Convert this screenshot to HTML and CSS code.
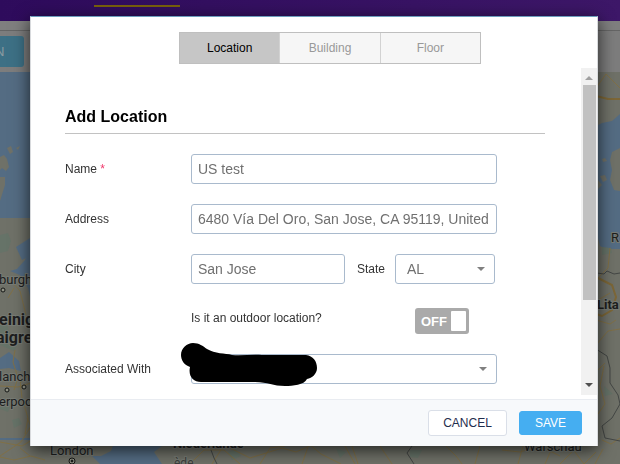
FILE: index.html
```
<!DOCTYPE html>
<html lang="en">
<head>
<meta charset="UTF-8" />
<meta name="viewport" content="width=device-width, initial-scale=1" />
<title>Add Location</title>
<link rel="stylesheet" href="styles.css">
</head>
<body>
<div class="page">
  <header class="topbar"><span class="topbar-active"></span></header>
  <div class="toolbar"><button type="button" class="map-btn">N</button></div>
  <svg class="map" viewBox="0 72 620 392" preserveAspectRatio="xMinYMin slice" aria-hidden="true">
    <rect y="72" width="620" height="392" fill="#546c83" />
    <!-- land -->
    <g fill="#6f7168">
      <path d="M0 157l4-2 3 4 2 8-3 4-4-3-2 2zM7 148l4-2 2 6-3 2zM16 148l4-2-2 4zM0 177l5 0 0 8-5 16z" />
      <path d="M0 218h31v28l-6 14-8 9-7 2 10 4 8 13 3 12v156h70l10-5 5-13H0z" />
      <path d="M100 464l-8-8 0-16h-92v24z" />
      <path d="M170 440h450v24H162l-8-12z" />
      <path d="M596 72h24v42l-8 7-10 2-6 3zM620 148l-8 4-2 8 2 10-2 10 4 10 6 1zM602 159l3-1 2 3-4 1zM600 176l5-1 2 5-4 2zM598 180l4 5-4 4z" />
      <path d="M596 230l4 16 6 3h14v215h-24z" />
    </g>
    <path d="M16 247l14-9v18l-8 4zM0 358l9-6 10 9 2 10-12-3-9 1z" fill="#546c83" />
    <g fill="#667368">
      <path d="M0 235l8-2 3 8-3 10-8 2zM0 318l6 3 5 17 7 6-4 7-14-6zM3 398l9 5-4 9-8-3zM12 420l7-2 3 6-8 4zM604 386l9 8-8 2zM602 247l9 1 1 5-10 2zM336 448l10 4-6 6zM410 450h12l-4 8-8-1zM228 452l8-3 5 7-9 4z" />
    </g>
    <!-- roads -->
    <g fill="none" stroke="#807047" stroke-width="1">
      <path d="M0 275l10 5 10 11 6 24M14 288l-6 10M15 350l-2 12 5 16-4 12M0 386l18 1 13-4M20 380l2 18 6 20-3 16M0 457l14 3 17-4 14 4M27 418l4 8-10 16-21 14M0 442l22 4 10-6M30 456l-10-8" />
      <path d="M596 88l10-14 14 14M610 248l-2 20-12 12M596 320l14 4 6-4M598 300l12-7M596 345l12-14 12-2M604 366l-4 20 5 18-7 10M596 372l9-9M602 440l9 4 9-6M603 449l-8 15" />
      <path d="M190 464l14-14 20 0 16 14M212 464l12-19 26 13 32-10 14 4 18-8M260 464l10-16 15-2M302 464l7-20 12 10 20 10M345 446l10 18M358 464l-6-18M380 446l12 18M446 446l10 10 6 8M480 446l-5 18M502 450l18 2 20-6 20 10M518 464l5-18M545 464l7-16M572 448l12 16 12-12M560 464l14-14" />
    </g>
    <path d="M596 96l12 3 12 0M596 314l6 2 10-6 4-13-4-12-14-7M20 382l8-7 3 4" fill="none" stroke="#7d6737" stroke-width="2" />
    <!-- borders -->
    <path d="M597 273l7 1 3-3 7 3 6-1M596 349l11 7 3 12 0 15 8 12 2 9-8 14-10 8 3 12 15 3M412 446l-5 7 7 11M211 450l3 8 3 6" fill="none" stroke="#444745" stroke-width="1" />
    <g fill="#929487" stroke="#151716" stroke-width="1">
      <circle cx="3" cy="290" r="2" /><circle cx="7" cy="390" r="2" /><circle cx="24" cy="387" r="2" />
      <circle cx="72" cy="461" r="3" /><circle cx="72" cy="461" r="1" fill="#151716" />
    </g>
    <g class="map-labels">
      <text x="-1" y="284">burgh</text>
      <text x="-1" y="381">lanch</text>
      <text x="-1" y="406">erpoo</text>
      <text x="50" y="455">London</text>
      <text x="611" y="242">R</text>
      <text x="524" y="451">Warschau</text>
    </g>
    <g class="map-labels map-minor">
      <text x="174" y="467">ède</text>
    </g>
    <g class="map-labels map-countries">
      <text x="-1" y="325">einig</text>
      <text x="-4" y="343">aigre</text>
    </g>
    <g class="map-labels map-regions">
      <text x="597" y="309">Lita</text>
      <text x="173" y="448">Niederlande</text>
    </g>
  </svg>
</div>

<div class="overlay">
  <form class="modal" aria-labelledby="modal-title">
    <nav class="steps" aria-label="Steps">
      <button type="button" class="step active">Location</button>
      <button type="button" class="step">Building</button>
      <button type="button" class="step">Floor</button>
    </nav>
    <div class="modal-body">
      <div class="fields">
        <h1 id="modal-title">Add Location</h1>
        <div class="field">
          <label for="name">Name <span class="required">*</span></label>
          <input class="control" type="text" id="name" value="US test" />
        </div>
        <div class="field">
          <label for="address">Address</label>
          <input class="control" type="text" id="address" value="6480 Vía Del Oro, San Jose, CA 95119, United" />
        </div>
        <div class="field">
          <label for="city">City</label>
          <div class="city-state">
            <input class="control" type="text" id="city" value="San Jose" />
            <label for="state">State</label>
            <div class="select">
              <select class="control" id="state"><option>AL</option></select>
            </div>
          </div>
        </div>
        <div class="outdoor">
          <label for="outdoor">Is it an outdoor location?</label>
          <span class="switch">
            <input type="checkbox" id="outdoor" />
            <span class="switch-text">OFF</span>
            <span class="switch-knob"></span>
          </span>
        </div>
        <div class="field">
          <label for="associated">Associated With</label>
          <div class="select">
            <select class="control" id="associated"><option></option></select>
            <svg class="redaction" width="136" height="44" viewBox="181 344 136 44" aria-hidden="true">
              <path d="M193 344C199 344 203 347 207 350C215 355 225 354 232 356C242 357 252 355 262 356L306 356C313 357 317 362 317 369C317 375 312 379 307 380C304 386 293 387 285 387C273 387 268 383 255 383L201 383C193 383 188 377 190 368C184 366 181 361 181 356C181 349 187 344 193 344Z" />
            </svg>
          </div>
        </div>
      </div>
      <div class="scrollbar" aria-hidden="true">
        <svg class="arrow-up" width="8" height="4" viewBox="0 0 8 4"><path d="M0 4L4 0L8 4Z" /></svg>
        <span class="thumb"></span>
        <svg class="arrow-down" width="8" height="4" viewBox="0 0 8 4"><path d="M0 0H8L4 4Z" /></svg>
      </div>
    </div>
    <footer class="modal-footer">
      <button type="button" class="btn">CANCEL</button>
      <button type="submit" class="btn btn-primary">SAVE</button>
    </footer>
  </form>
</div>
</body>
</html>
```
FILE: styles.css
```
* {
  box-sizing: border-box;
}
body {
  margin: 0;
  font-family: "Liberation Sans", Arial, sans-serif;
  font-size: 12px;
  color: #333;
}
button, input, select {
  font-family: inherit;
}

/* Page behind the dialog */
.page {
  height: 100vh;
  overflow: hidden;
  display: flex;
  flex-direction: column;
}
.topbar {
  height: 21px;
  flex: none;
  padding: 5px 0 0 94px;
  background: linear-gradient(90deg, #2e0b5c, #3d1768);
}
.topbar-active {
  display: block;
  width: 86px;
  height: 2px;
  background: #78600c;
}
.toolbar {
  height: 51px;
  flex: none;
  padding-top: 15px;
  background: linear-gradient(#7f7f7f 9px, #656565 9px, #656565 10px, #7d7d7d 10px);
}
.map-btn {
  width: 24px;
  height: 31px;
  padding: 0;
  border: none;
  border-radius: 0 3px 3px 0;
  background: #3d7085;
  color: #8c9ba1;
  font-size: 13px;
  text-align: left;
  text-indent: -5px;
}
.map {
  flex: 1;
  width: 100%;
  min-height: 0;
}
.map-labels {
  font-family: Roboto, sans-serif;
  font-size: 13px;
  fill: #1d1e1e;
  stroke: #777b74;
  stroke-width: 2px;
  paint-order: stroke;
}
.map-minor {
  font-size: 12px;
  fill: #3c3e3c;
}
.map-countries {
  font-size: 16px;
  font-weight: 700;
}
.map-regions {
  font-size: 13px;
  font-weight: 700;
}

/* Dialog */
.overlay {
  position: fixed;
  inset: 0;
  padding: 16px 22px 18px 30px;
}
.modal {
  height: 100%;
  display: flex;
  flex-direction: column;
  background: #fff;
  border: 1px solid #d8dadd;
  border-top-color: #6c9dbd;
  border-bottom: none;
  box-shadow: 0 4px 16px rgba(0, 0, 0, 0.7);
}
.steps {
  flex: none;
  display: flex;
  width: 302px;
  height: 32px;
  margin: 15px 0 4px 148px;
  border: 1px solid #bfbfbf;
}
.step {
  flex: 1;
  padding: 0;
  border: none;
  border-left: 1px solid #d2d2d2;
  background: #f6f6f6;
  color: #999;
  font-size: 12px;
}
.step:first-child {
  border-left: none;
}
.step.active {
  background: #c6c6c6;
  color: #000;
}
.modal-body {
  flex: 1;
  min-height: 0;
  display: flex;
  overflow: hidden;
}
.fields {
  flex: 1;
  min-width: 0;
  padding: 38px 36px 0 34px;
}
h1 {
  margin: 0 0 20px;
  padding-bottom: 5px;
  border-bottom: 1px solid #c2c2c2;
  font-size: 16px;
  line-height: 22px;
  color: #000;
}
.field {
  display: grid;
  grid-template-columns: 126px 1fr;
  margin: 0 48px 20px 0;
}
.field label {
  line-height: 30px;
}
.required {
  color: #f0386b;
}
.control {
  width: 100%;
  height: 30px;
  padding: 0 6px;
  border: 1px solid #a9bacd;
  border-radius: 3px;
  background: #fff;
  color: #707070;
  font-size: 14px;
}
.city-state {
  display: grid;
  grid-template-columns: 154px 1fr 100px;
  padding-right: 2px;
}
.city-state label {
  padding-left: 12px;
}
.select {
  position: relative;
}
.select::after {
  content: "";
  position: absolute;
  top: 13px;
  right: 10px;
  border: 4px solid transparent;
  border-top-color: #808080;
  border-bottom: none;
}
select.control {
  appearance: none;
  padding: 0 11px;
}
.outdoor {
  display: flex;
  justify-content: space-between;
  margin: 24px 76px 20px 126px;
}
.outdoor label {
  line-height: 20px;
}
.switch {
  position: relative;
  display: flex;
  align-items: center;
  justify-content: space-between;
  width: 54px;
  height: 26px;
  padding: 0 3px 0 6px;
  border-radius: 3px;
  background: #aaa;
  color: #fff;
}
.switch input {
  position: absolute;
  inset: 0;
  width: 100%;
  height: 100%;
  margin: 0;
  opacity: 0;
}
.switch-text {
  font-size: 13px;
  font-weight: 700;
}
.switch-knob {
  width: 15px;
  height: 20px;
  border-radius: 1px;
  background: #fff;
}
.redaction {
  position: absolute;
  top: -11px;
  left: -10px;
}
.scrollbar {
  flex: none;
  display: flex;
  flex-direction: column;
  align-items: center;
  width: 16px;
  margin-bottom: 4px;
  padding: 8px 0;
  background: #f1f1f1;
}
.thumb {
  width: 13px;
  margin-top: 5px;
  flex: 0 0 215px;
  background: #c1c1c1;
}
.arrow-up, .arrow-down {
  flex: none;
  fill: #505050;
}
.arrow-up {
  fill: #a0a0a0;
}
.arrow-down {
  margin-top: auto;
}
.modal-footer {
  flex: none;
  display: flex;
  justify-content: flex-end;
  align-items: center;
  gap: 12px;
  height: 47px;
  padding-right: 15px;
  border-top: 1px solid #e9ecf1;
  background: #f7f9fb;
}
.btn {
  height: 26px;
  padding: 0 14px;
  border: 1px solid #dadfe8;
  border-radius: 3px;
  background: #fff;
  color: #1f2d4d;
  font-size: 12px;
}
.btn-primary {
  height: 24px;
  padding: 0 15px;
  border-color: #45aef1;
  background: #45aef1;
  color: #fff;
}
```
